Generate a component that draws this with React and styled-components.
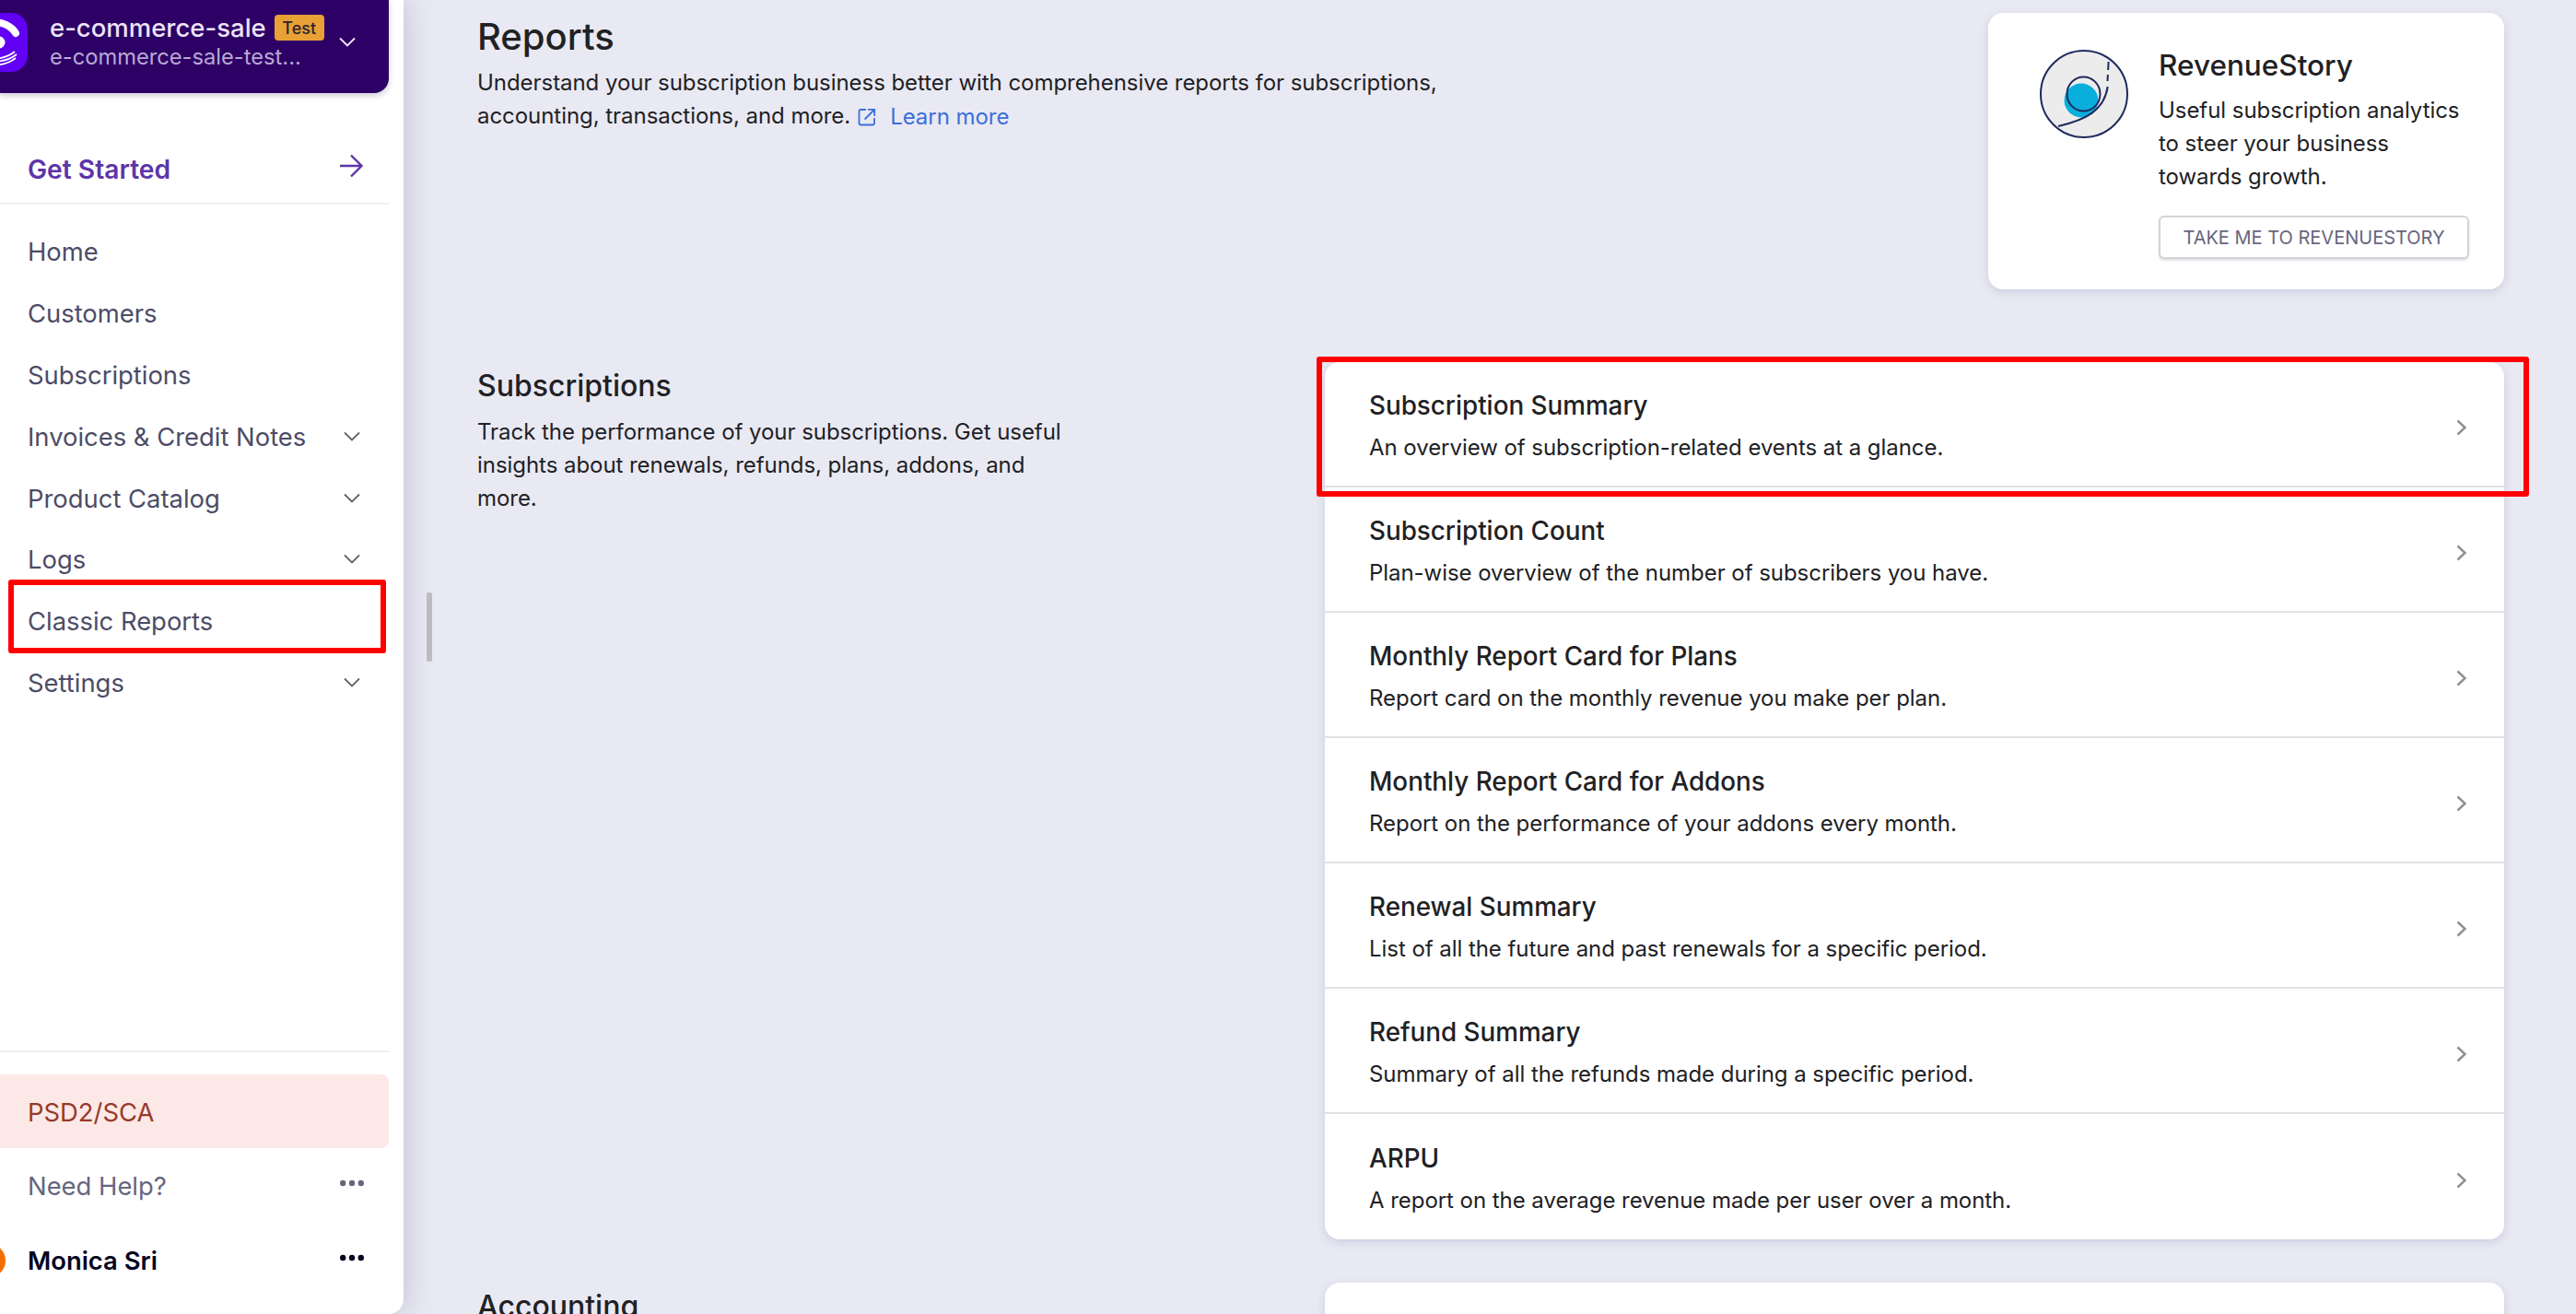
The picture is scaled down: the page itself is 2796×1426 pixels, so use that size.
import React from 'react';
import styled, { createGlobalStyle } from 'styled-components';

const GlobalStyle = createGlobalStyle`
  html, body {
    margin: 0;
    padding: 0;
    background: #e9e9f3;
  }
  body {
    font-family: Inter, "Noto Sans", "Liberation Sans", sans-serif;
    color: #212124;
  }
  * {
    box-sizing: border-box;
  }
`;

const navItems = [
  { label: 'Home' },
  { label: 'Customers' },
  { label: 'Subscriptions' },
  { label: 'Invoices & Credit Notes', chevron: true },
  { label: 'Product Catalog', chevron: true },
  { label: 'Logs', chevron: true },
  { label: 'Classic Reports', marked: true },
  { label: 'Settings', chevron: true },
];

const reports = [
  ['Subscription Summary', 'An overview of subscription-related events at a glance.'],
  ['Subscription Count', 'Plan-wise overview of the number of subscribers you have.'],
  ['Monthly Report Card for Plans', 'Report card on the monthly revenue you make per plan.'],
  ['Monthly Report Card for Addons', 'Report on the performance of your addons every month.'],
  ['Renewal Summary', 'List of all the future and past renewals for a specific period.'],
  ['Refund Summary', 'Summary of all the refunds made during a specific period.'],
  ['ARPU', 'A report on the average revenue made per user over a month.'],
];

function ChevronDown({ color = '#63636b' }) {
  return (
    <svg width="20" height="12" viewBox="0 0 20 12" fill="none">
      <path d="M2 1.5 L10 9.5 L18 1.5" stroke={color} strokeWidth="1.8" />
    </svg>
  );
}

function ChevronRight() {
  return (
    <RowChevron width="12" height="18" viewBox="0 0 12 18" fill="none">
      <path d="M1.5 1.5 L9.5 9 L1.5 16.5" stroke="#8f8f93" strokeWidth="2.4" />
    </RowChevron>
  );
}

function Dots({ color }) {
  return (
    <DotsIcon width="26" height="8" viewBox="0 0 26 8">
      <circle cx="3.2" cy="4" r="3.2" fill={color} />
      <circle cx="13" cy="4" r="3.2" fill={color} />
      <circle cx="22.8" cy="4" r="3.2" fill={color} />
    </DotsIcon>
  );
}

function App() {
  return (
    <Page>
      <GlobalStyle />
      <Sidebar>
        <SiteHeader>
          <SiteLogo viewBox="0 0 64 64">
            <rect width="64" height="64" rx="18" fill="#6100f3" />
            <path d="M26 10 C36 10 46 14 51 22" stroke="#fff" strokeWidth="8" fill="none" strokeLinecap="round" />
            <circle cx="33" cy="32" r="6.5" fill="#fff" />
            <path d="M24 50 C34 50 44 47 50 42 M24 53 C36 53 46 50 52 45 M24 57 C36 57 46 53 51 49" stroke="#fff" strokeWidth="1.8" fill="none" />
          </SiteLogo>
          <SiteText>
            <SiteName>
              e-commerce-sale <TestBadge>Test</TestBadge>
            </SiteName>
            <SiteDomain>e-commerce-sale-test...</SiteDomain>
          </SiteText>
          <ChevronDown color="#f1e9fb" />
        </SiteHeader>
        <GetStarted>
          <GetStartedLabel>Get Started</GetStartedLabel>
          <svg width="26" height="26" viewBox="0 0 26 26" fill="none">
            <path d="M1 13 H24 M13 1.5 L24.5 13 L13 24.5" stroke="#5d35a8" strokeWidth="2.4" />
          </svg>
        </GetStarted>
        <Nav>
          {navItems.map((item) => (
            <NavItem key={item.label}>
              <span>{item.label}</span>
              {item.chevron && <ChevronDown />}
              {item.marked && <SidebarMark />}
            </NavItem>
          ))}
        </Nav>
        <SidebarFooter>
          <PsdLink>PSD2/SCA</PsdLink>
          <HelpRow>
            <span>Need Help?</span>
            <Dots color="#66667e" />
          </HelpRow>
          <UserRow>
            <Avatar />
            <UserName>Monica Sri</UserName>
            <Dots color="#04041f" />
          </UserRow>
        </SidebarFooter>
      </Sidebar>
      <ResizeHandle />
      <Main>
        <Intro>
          <IntroText>
            <PageTitle>Reports</PageTitle>
            <IntroCopy>
              Understand your subscription business better with comprehensive reports for subscriptions,
              accounting, transactions, and more.
              <LearnMore>
                <svg width="20" height="20" viewBox="0 0 20 20" fill="none">
                  <path d="M9 2 H3.5 Q1.5 2 1.5 4 V16.5 Q1.5 18.5 3.5 18.5 H16 Q18 18.5 18 16.5 V11" stroke="#3b70d9" strokeWidth="1.8" />
                  <path d="M7.5 12.5 L17.5 2.5 M11 1.8 H18.2 V9" stroke="#3b70d9" strokeWidth="1.8" />
                </svg>
                Learn more
              </LearnMore>
            </IntroCopy>
          </IntroText>
          <PromoCard>
            <PromoLogo width="96" height="96" viewBox="0 0 96 96" fill="none">
              <circle cx="48" cy="48" r="47" fill="#ececec" stroke="#1f2a5f" strokeWidth="2" />
              <circle cx="45" cy="55" r="18.5" fill="#08afdc" />
              <ellipse cx="47.5" cy="48" rx="18" ry="18.6" stroke="#1f2a5f" strokeWidth="2" />
              <path d="M20 83 C50 76 70 66 73.7 40" stroke="#1f2a5f" strokeWidth="2" />
              <path d="M74.6 13 L73.5 34" stroke="#1f2a5f" strokeWidth="2" strokeDasharray="9 5" />
            </PromoLogo>
            <PromoBody>
              <PromoTitle>RevenueStory</PromoTitle>
              <PromoCopy>Useful subscription analytics to steer your business towards growth.</PromoCopy>
              <PromoButton>TAKE ME TO REVENUESTORY</PromoButton>
            </PromoBody>
          </PromoCard>
        </Intro>
        <Section>
          <SectionInfo>
            <SectionTitle>Subscriptions</SectionTitle>
            <SectionCopy>
              Track the performance of your subscriptions. Get useful insights about renewals, refunds, plans, addons, and more.
            </SectionCopy>
          </SectionInfo>
          <ReportList>
            {reports.map(([title, copy], index) => (
              <ReportRow key={title}>
                <ReportText>
                  <ReportTitle>{title}</ReportTitle>
                  <ReportCopy>{copy}</ReportCopy>
                </ReportText>
                <ChevronRight />
                {index === 0 && <RowMark />}
              </ReportRow>
            ))}
          </ReportList>
        </Section>
        <Section>
          <SectionInfo>
            <SectionTitle>Accounting</SectionTitle>
          </SectionInfo>
          <ReportList>
            <ReportRow />
          </ReportList>
        </Section>
      </Main>
    </Page>
  );
}

const Page = styled.div`
  position: relative;
  display: flex;
  width: 2796px;
  height: 1426px;
  overflow: hidden;
  background: #e9e9f3;
`;

const Sidebar = styled.aside`
  display: flex;
  flex-direction: column;
  flex: none;
  width: 438px;
  height: 1426px;
  padding-right: 16px;
  background: #fff;
  border-bottom-right-radius: 16px;
  box-shadow: 4px 0 28px rgba(120, 120, 170, 0.32);
`;

const SiteHeader = styled.div`
  display: flex;
  align-items: center;
  height: 101px;
  padding: 0 35px 9px 0;
  background: #2d0066;
  border-bottom-right-radius: 16px;
  box-shadow: 0 3px 6px rgba(60, 60, 90, 0.25);
`;

const SiteLogo = styled.svg`
  flex: none;
  width: 64px;
  height: 64px;
  margin: 0 24px 0 -34px;
`;

const SiteText = styled.div`
  flex: 1;
  min-width: 0;
`;

const SiteName = styled.div`
  display: flex;
  align-items: center;
  gap: 9px;
  height: 32px;
  font-size: 27.5px;
  font-weight: 500;
  color: #ece4f6;
  white-space: nowrap;
`;

const TestBadge = styled.span`
  display: flex;
  align-items: center;
  justify-content: center;
  width: 54px;
  height: 28px;
  font-size: 18px;
  font-weight: 500;
  color: #2b2430;
  background: #e9a035;
  border-radius: 4px;
`;

const SiteDomain = styled.div`
  height: 32px;
  font-size: 23.7px;
  line-height: 32px;
  color: #b9a9d3;
  white-space: nowrap;
`;

const GetStarted = styled.div`
  display: flex;
  align-items: center;
  justify-content: space-between;
  height: 121px;
  padding: 38px 28px 0 30px;
  font-size: 28.2px;
  font-weight: 600;
  color: #5d35a8;
  border-bottom: 2px solid #f0f0f3;
`;

const GetStartedLabel = styled.span`
  margin-top: 8px;
`;

const Nav = styled.nav`
  display: flex;
  flex-direction: column;
  padding-top: 18px;
`;

const NavItem = styled.div`
  position: relative;
  display: flex;
  align-items: center;
  justify-content: space-between;
  height: 66.8px;
  padding: 0 30px;
  font-size: 27.4px;
  color: #4c4c66;
`;

const SidebarMark = styled.div`
  position: absolute;
  top: -12px;
  left: 9px;
  width: 410px;
  height: 80px;
  border: 6px solid #ff0000;
  border-radius: 3px;
`;

const SidebarFooter = styled.div`
  display: flex;
  flex-direction: column;
  margin-top: auto;
  padding: 24px 0 18px;
  border-top: 2px solid #f0f0f3;
`;

const PsdLink = styled.div`
  display: flex;
  align-items: center;
  height: 80px;
  padding: 2px 0 0 30px;
  font-size: 27.4px;
  color: #96392a;
  background: #fce8e6;
  border-radius: 0 8px 8px 0;
`;

const HelpRow = styled.div`
  display: flex;
  align-items: center;
  justify-content: space-between;
  height: 82px;
  padding: 0 27px 0 30px;
  font-size: 27.4px;
  color: #66667e;
`;

const UserRow = styled.div`
  display: flex;
  align-items: center;
  height: 80px;
  padding-right: 27px;
`;

const DotsIcon = styled.svg`
  margin-bottom: 6px;
`;

const Avatar = styled.div`
  flex: none;
  width: 36px;
  height: 36px;
  margin: 0 24px 0 -30px;
  background: #f46f02;
  border-radius: 50%;
`;

const UserName = styled.div`
  flex: 1;
  font-size: 27.4px;
  font-weight: 600;
  color: #04041f;
`;

const ResizeHandle = styled.div`
  position: absolute;
  top: 643px;
  left: 463px;
  width: 6px;
  height: 75px;
  background: #bcbcbe;
  border-radius: 2px;
`;

const Main = styled.main`
  flex: 1;
  min-width: 0;
  padding: 14px 78px 0 80px;
`;

const Intro = styled.div`
  display: flex;
  justify-content: space-between;
  align-items: flex-start;
  margin-bottom: 79px;
`;

const IntroText = styled.div`
  width: 1080px;
`;

const PageTitle = styled.h1`
  margin: 0;
  font-size: 40px;
  line-height: 52px;
  font-weight: 550;
`;

const IntroCopy = styled.p`
  margin: 6px 0 0;
  font-size: 24px;
  line-height: 36px;
  letter-spacing: -0.05px;
`;

const LearnMore = styled.a`
  display: inline-flex;
  align-items: center;
  gap: 15px;
  margin-left: 8px;
  vertical-align: -3px;
  color: #3b70d9;
`;

const PromoCard = styled.div`
  display: flex;
  gap: 33px;
  width: 560px;
  height: 300px;
  padding: 39px 38px 0 56px;
  background: #fff;
  border-radius: 16px;
  box-shadow: 0 3px 10px rgba(120, 120, 170, 0.25);
`;

const PromoLogo = styled.svg`
  flex: none;
  margin-top: 1px;
`;

const PromoBody = styled.div`
  flex: 1;
  min-width: 0;
`;

const PromoTitle = styled.div`
  font-size: 31.5px;
  line-height: 36px;
  font-weight: 550;
`;

const PromoCopy = styled.p`
  margin: 13px 0 0;
  font-size: 24px;
  line-height: 36px;
  letter-spacing: -0.05px;
`;

const PromoButton = styled.button`
  display: block;
  width: 337px;
  height: 47px;
  margin-top: 24px;
  padding: 0 0 0 0;
  font-family: inherit;
  font-size: 20px;
  color: #66667e;
  background: #fff;
  border: 2px solid #d2d2d8;
  border-radius: 6px;
  box-shadow: 0 2px 2px rgba(90, 90, 110, 0.18);
`;

const Section = styled.section`
  display: grid;
  grid-template-columns: 920px 1280px;
  margin-bottom: 47px;
`;

const SectionInfo = styled.div`
  padding-top: 6px;
`;

const SectionTitle = styled.h2`
  margin: 0;
  font-size: 32px;
  line-height: 40px;
  font-weight: 550;
`;

const SectionCopy = styled.p`
  width: 660px;
  margin: 12px 0 0;
  font-size: 24px;
  line-height: 36px;
  letter-spacing: -0.05px;
`;

const ReportList = styled.div`
  background: #fff;
  border-radius: 16px;
  box-shadow: 0 3px 10px rgba(120, 120, 170, 0.25);
`;

const ReportRow = styled.div`
  position: relative;
  display: flex;
  align-items: center;
  justify-content: space-between;
  height: 136px;
  padding: 0 40px 0 48px;
  border-bottom: 2px solid #e1e1e7;
  &:last-child {
    border-bottom: none;
  }
`;

const ReportText = styled.div`
  margin-top: 5px;
`;

const RowChevron = styled.svg`
  margin-top: 8px;
`;

const ReportTitle = styled.div`
  font-size: 27.8px;
  line-height: 36px;
  font-weight: 550;
`;

const ReportCopy = styled.div`
  margin-top: 11px;
  font-size: 24px;
  line-height: 34px;
  letter-spacing: -0.05px;
`;

const RowMark = styled.div`
  position: absolute;
  top: -6px;
  left: -9px;
  width: 1316px;
  height: 152px;
  border: 6px solid #ff0000;
  border-radius: 3px;
`;

export default App;
